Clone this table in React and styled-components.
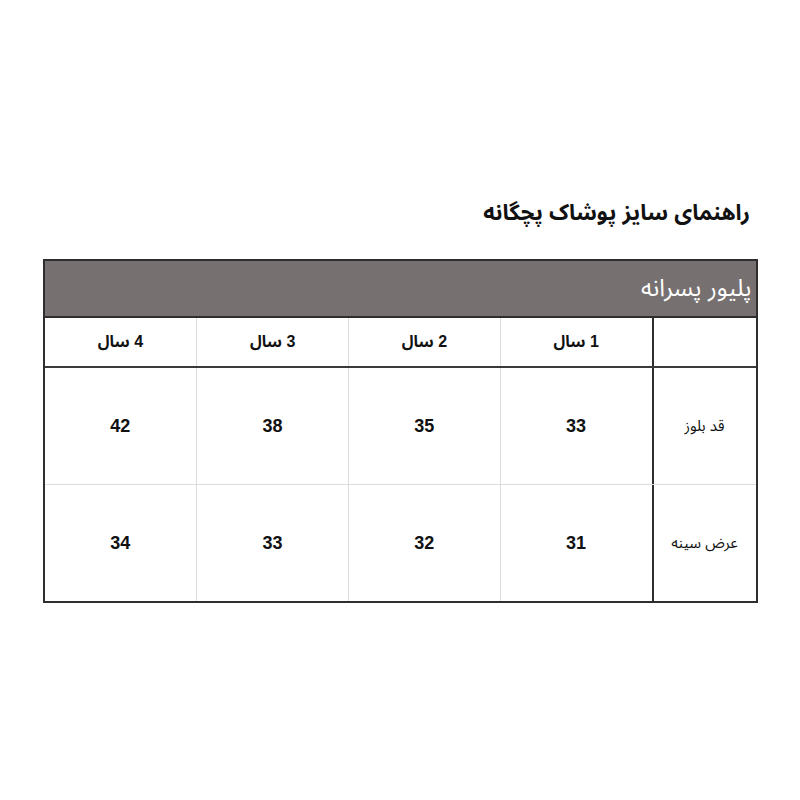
import React from "react";
import styled, { createGlobalStyle } from "styled-components";

const Global = createGlobalStyle`
  html, body { margin: 0; padding: 0; background: #fff; }
  body { font-family: "Liberation Sans", "Noto Sans Arabic", "DejaVu Sans", Arial, sans-serif; color: #111; }
`;

const Page = styled.div`
  direction: rtl;
  width: 800px;
  padding-top: 198px;
  box-sizing: border-box;
`;

const Title = styled.h1`
  margin: 0 50px 31px 0;
  font-size: 22px;
  line-height: 30px;
  font-weight: bold;
  text-align: right;
`;

const Table = styled.div`
  width: 715px;
  margin: 0 auto;
  border: 2px solid #2e2e2e;
  box-sizing: border-box;
`;

const Band = styled.div`
  height: 55px;
  background: #767170;
  color: #fff;
  font-size: 24px;
  display: flex;
  align-items: center;
  padding-right: 4px;
  border-bottom: 2px solid #2e2e2e;
`;

const Row = styled.div`
  display: grid;
  grid-template-columns: 104px repeat(4, 1fr);
  height: ${(p) => p.$h}px;
  border-bottom: ${(p) => (p.$last ? "none" : p.$dark ? "2px solid #3a3a3a" : "1px solid #dcdcdc")};
`;

const Cell = styled.div`
  display: flex;
  align-items: center;
  justify-content: center;
  border-left: ${(p) => (p.$label ? "2px solid #2e2e2e" : p.$end ? "none" : "1px solid #dcdcdc")};
  font-size: ${(p) => p.$size}px;
  font-weight: ${(p) => (p.$bold ? "bold" : "normal")};
`;

const years = ["1 سال", "2 سال", "3 سال", "4 سال"];
const rows = [
  { label: "قد بلوز", values: [33, 35, 38, 42] },
  { label: "عرض سینه", values: [31, 32, 33, 34] },
];

export default function App() {
  return (
    <>
      <Global />
      <Page>
        <Title>راهنمای سایز پوشاک پچگانه</Title>
        <Table>
          <Band>پلیور پسرانه</Band>
          <Row $h={48} $dark>
            <Cell $label />
            {years.map((y, i) => (
              <Cell key={y} $bold $size={16} $end={i === 3}>
                {y}
              </Cell>
            ))}
          </Row>
          {rows.map((r, ri) => (
            <Row key={r.label} $h={116} $last={ri === rows.length - 1}>
              <Cell $label $size={15}>
                {r.label}
              </Cell>
              {r.values.map((v, i) => (
                <Cell key={i} $bold $size={18} $end={i === 3}>
                  {v}
                </Cell>
              ))}
            </Row>
          ))}
        </Table>
      </Page>
    </>
  );
}
